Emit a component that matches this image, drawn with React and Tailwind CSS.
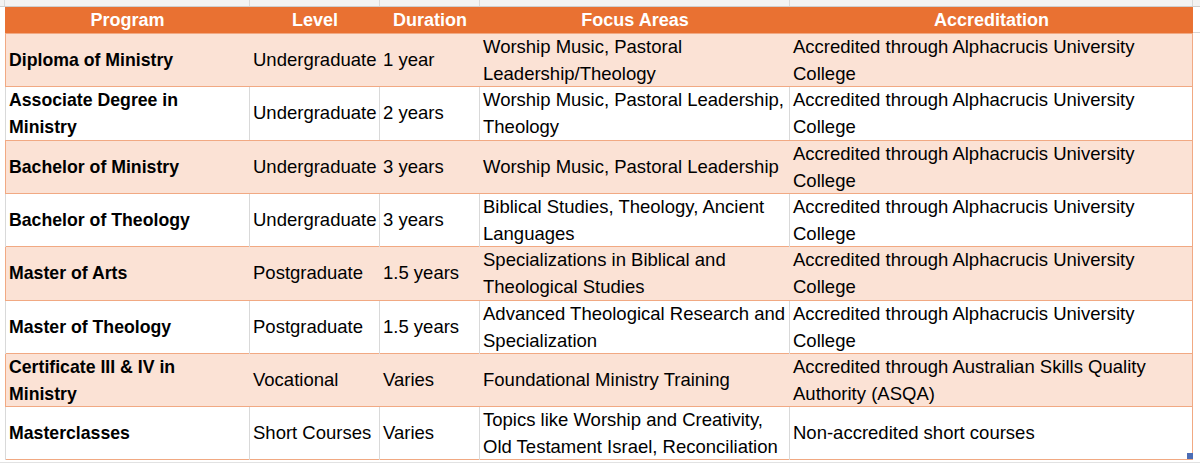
const rows = [
  {
    program: ["Diploma of Ministry"],
    level: "Undergraduate",
    duration: "1 year",
    focus: ["Worship Music, Pastoral", "Leadership/Theology"],
    accred: ["Accredited through Alphacrucis University", "College"],
    h: "h-[53px]",
  },
  {
    program: ["Associate Degree in", "Ministry"],
    level: "Undergraduate",
    duration: "2 years",
    focus: ["Worship Music, Pastoral Leadership,", "Theology"],
    accred: ["Accredited through Alphacrucis University", "College"],
    h: "h-[54px]",
  },
  {
    program: ["Bachelor of Ministry"],
    level: "Undergraduate",
    duration: "3 years",
    focus: ["Worship Music, Pastoral Leadership"],
    accred: ["Accredited through Alphacrucis University", "College"],
    h: "h-[53px]",
  },
  {
    program: ["Bachelor of Theology"],
    level: "Undergraduate",
    duration: "3 years",
    focus: ["Biblical Studies, Theology, Ancient", "Languages"],
    accred: ["Accredited through Alphacrucis University", "College"],
    h: "h-[53px]",
  },
  {
    program: ["Master of Arts"],
    level: "Postgraduate",
    duration: "1.5 years",
    focus: ["Specializations in Biblical and", "Theological Studies"],
    accred: ["Accredited through Alphacrucis University", "College"],
    h: "h-[54px]",
  },
  {
    program: ["Master of Theology"],
    level: "Postgraduate",
    duration: "1.5 years",
    focus: ["Advanced Theological Research and", "Specialization"],
    accred: ["Accredited through Alphacrucis University", "College"],
    h: "h-[53px]",
  },
  {
    program: ["Certificate III & IV in", "Ministry"],
    level: "Vocational",
    duration: "Varies",
    focus: ["Foundational Ministry Training"],
    accred: ["Accredited through Australian Skills Quality", "Authority (ASQA)"],
    h: "h-[53px]",
  },
  {
    program: ["Masterclasses"],
    level: "Short Courses",
    duration: "Varies",
    focus: ["Topics like Worship and Creativity,", "Old Testament Israel, Reconciliation"],
    accred: ["Non-accredited short courses"],
    h: "h-[53px]",
  },
];

const cols = "grid grid-cols-[245px_130px_100px_310px_403px]";

const Lines = ({ lines }) => (
  <div>
    {lines.map((l, i) => (
      <div key={i} className="whitespace-nowrap">
        {l}
      </div>
    ))}
  </div>
);

const App = () => {
  return (
    <div
      className="w-[1200px] h-[466px] bg-white text-black overflow-hidden relative"
      style={{ fontFamily: '"Liberation Sans", Arial, sans-serif' }}
    >
      {/* strip of the row above */}
      <div className="h-[7px] bg-[#f3f3f3] border-b border-[#cfcfcf] flex">
        <div className="w-[5px] border-r border-[#dadada]" />
        <div className="w-[245px] border-r border-[#dadada]" />
        <div className="w-[130px] border-r border-[#dadada]" />
        <div className="w-[100px] border-r border-[#dadada]" />
        <div className="w-[310px] border-r border-[#dadada]" />
        <div className="w-[403px] border-r border-[#dadada]" />
      </div>

      <div className="flex">
        <div className="w-[5px]" />
        <div className="w-[1188px] border-b border-[#F1A983]">
          <div className={`${cols} h-[26px] bg-[#E97132] text-white font-bold text-[18px] leading-[26px]`}>
            <div className="text-center">Program</div>
            <div className="text-center">Level</div>
            <div className="text-center">Duration</div>
            <div className="text-center">Focus Areas</div>
            <div className="text-center">Accreditation</div>
          </div>

          {rows.map((r, i) => {
            const pink = i % 2 === 0;
            const grid = pink ? "" : "border-r border-[#d9d9d9]";
            return (
              <div
                key={i}
                className={`${cols} ${r.h} border-t border-[#F1A983] text-[18.5px] leading-[26.5px] ${
                  pink ? "bg-[#FBE2D5]" : "bg-white"
                }`}
              >
                <div className={`flex items-center pl-[3px] font-bold text-[17.7px] border-l border-[#F1A983] ${grid}`}>
                  <Lines lines={r.program} />
                </div>
                <div className={`flex items-center pl-[3px] whitespace-nowrap ${grid}`}>{r.level}</div>
                <div className={`flex items-center pl-[3px] whitespace-nowrap ${grid}`}>{r.duration}</div>
                <div className={`flex items-center pl-[3px] ${grid}`}>
                  <Lines lines={r.focus} />
                </div>
                <div className="flex items-center pl-[3px] border-r border-[#F1A983]">
                  <Lines lines={r.accred} />
                </div>
              </div>
            );
          })}
        </div>
        <div className="flex-1 flex flex-col">
          <div className="h-[26px] border-b border-[#d9d9d9]" />
        </div>
      </div>

      <div className="h-[3px] border-b border-[#e2e2e2]" />

      {/* fill handle */}
      <div className="absolute left-[1187px] top-[453px] w-[6px] h-[6px] bg-[#4C6DB5]" />
    </div>
  );
};

export default App;
